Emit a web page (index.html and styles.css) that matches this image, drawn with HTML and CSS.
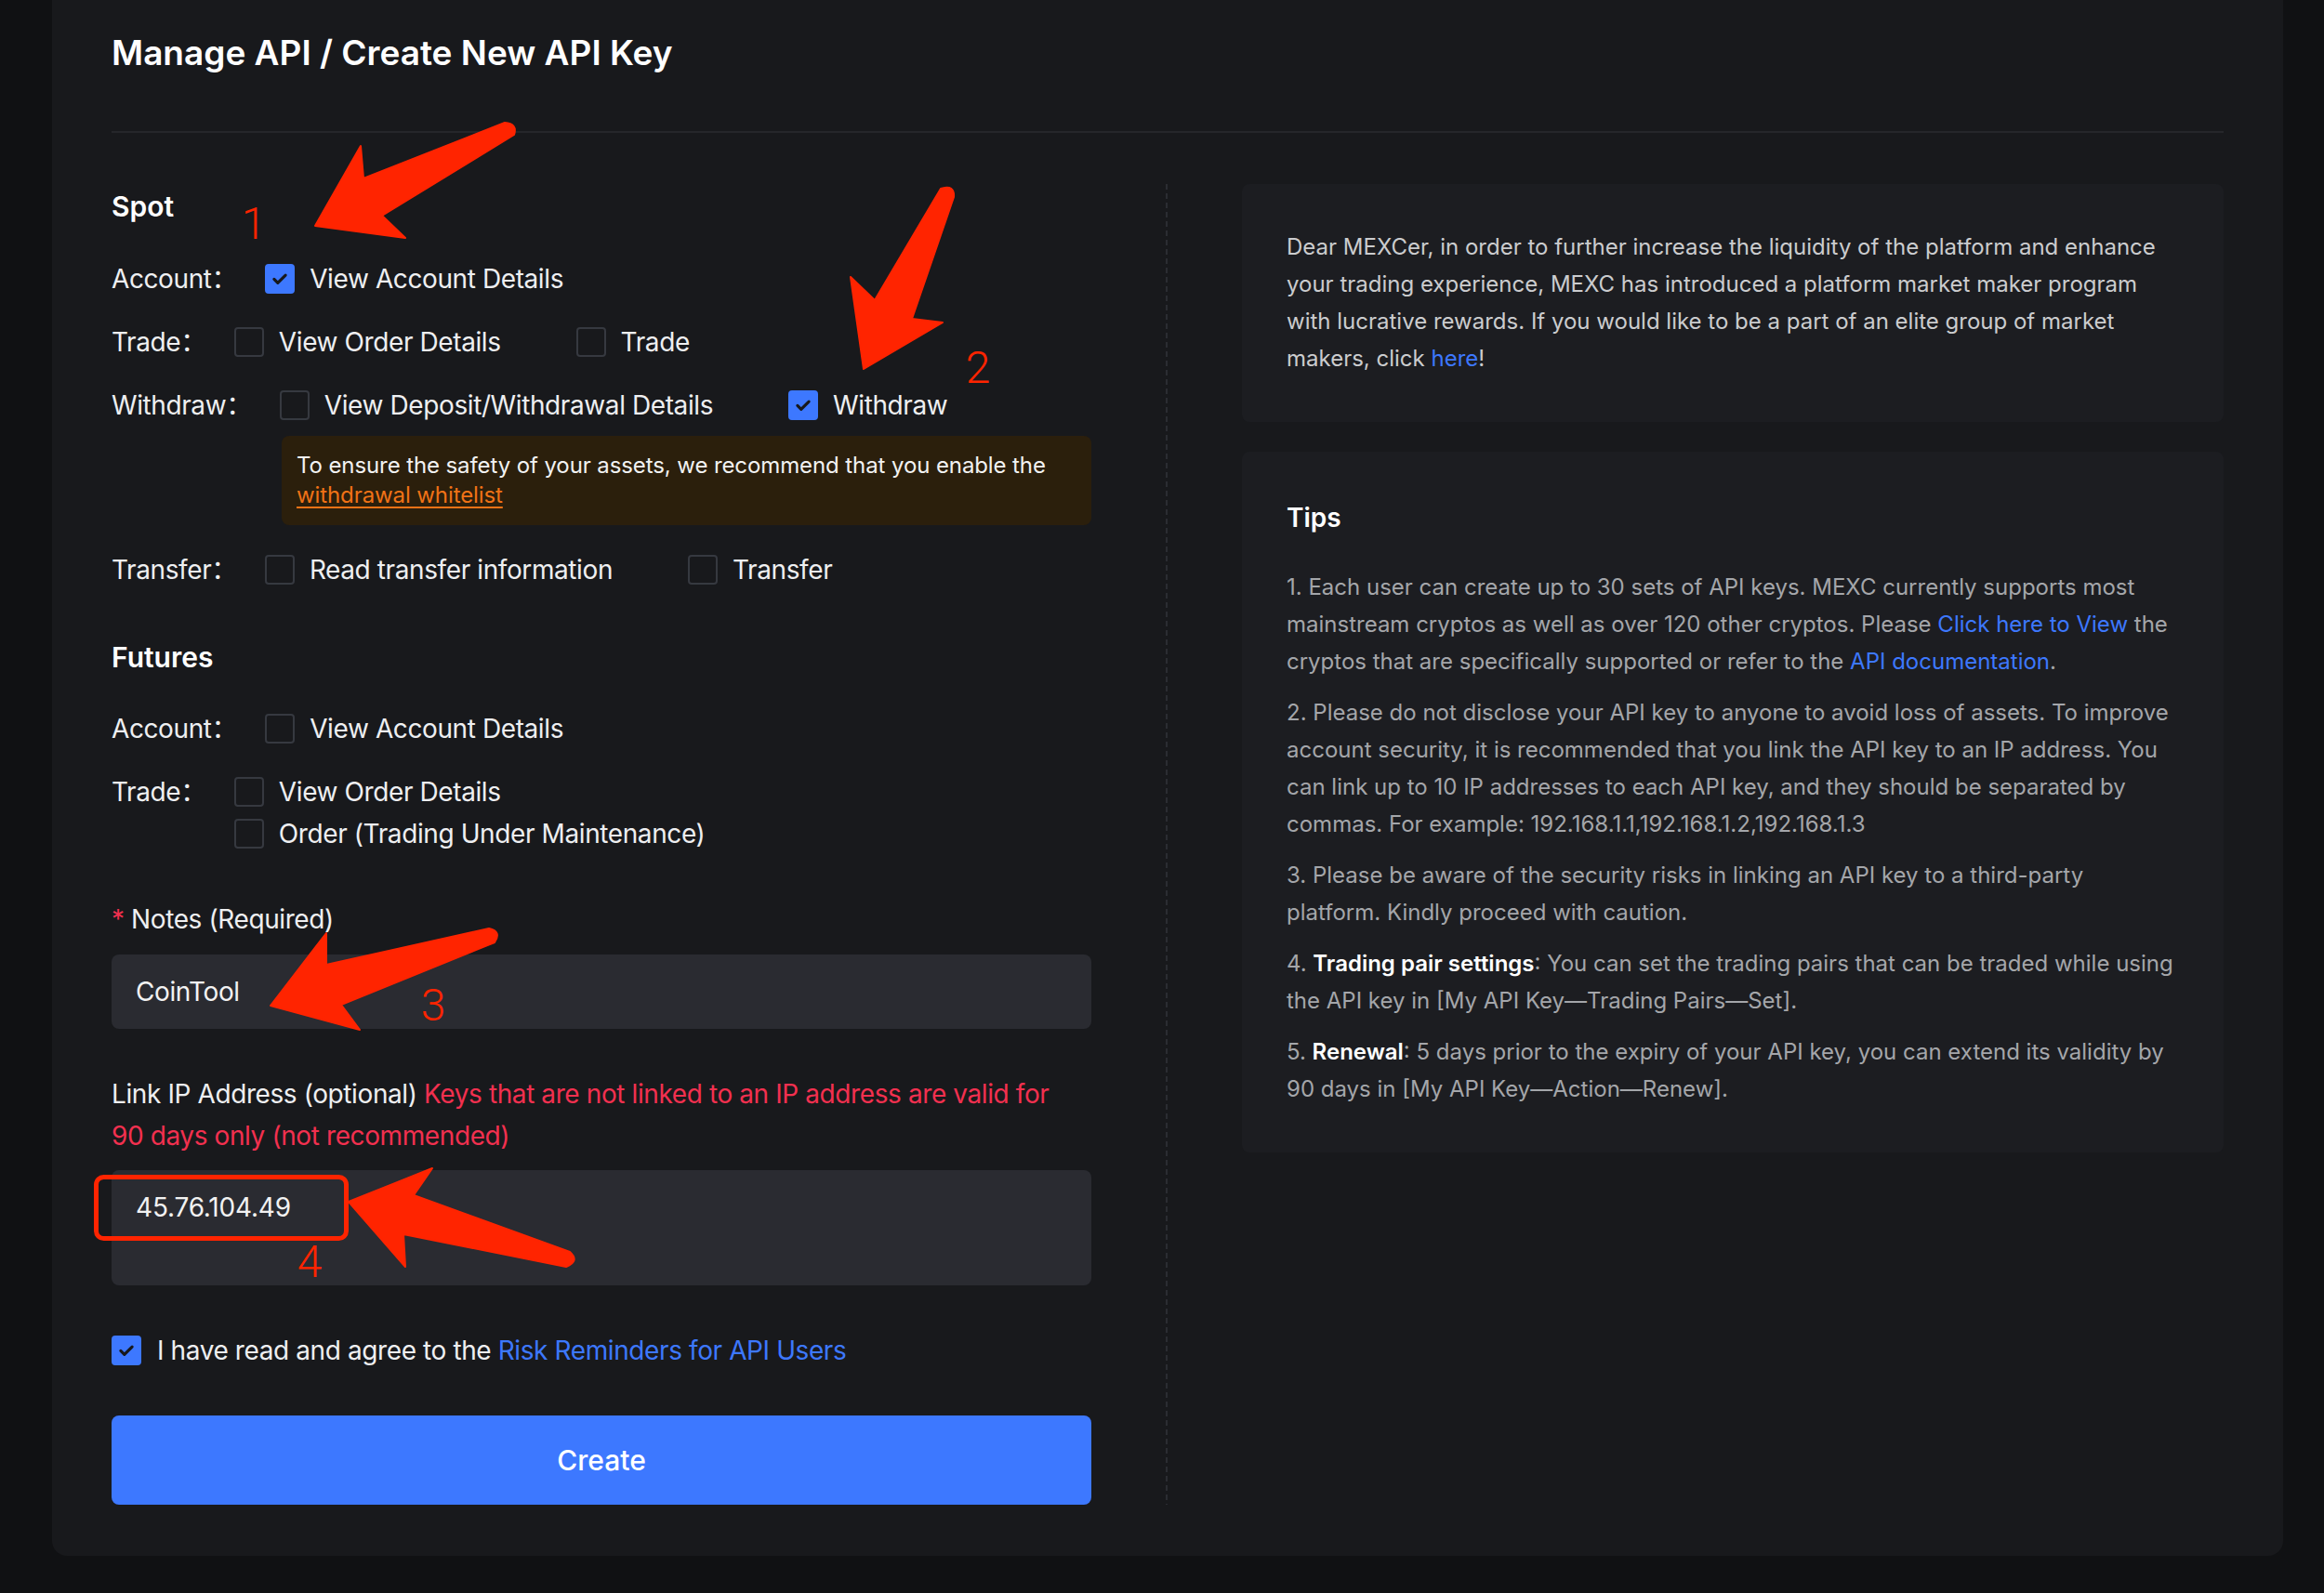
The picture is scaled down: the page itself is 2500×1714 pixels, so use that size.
FILE: index.html
```html
<!DOCTYPE html>
<html lang="en">
<head>
<meta charset="utf-8">
<title>Manage API / Create New API Key</title>
<link rel="stylesheet" href="styles.css">
</head>
<body>
<div class="page">
  <div class="card">
    <header class="head">
      <h1 class="title">Manage API / Create New API Key</h1>
    </header>
    <div class="main">
      <div class="form">
        <h2 class="sec">Spot</h2>
        <div class="row">
          <span class="lbl">Account：</span>
          <div class="opts">
            <label class="opt"><span class="cb on"><svg viewBox="0 0 32 32"><path d="M9 16.5l4.5 4.5L23 11.5"/></svg></span>View Account Details</label>
          </div>
        </div>
        <div class="row">
          <span class="lbl">Trade：</span>
          <div class="opts">
            <label class="opt"><span class="cb"></span>View Order Details</label>
            <label class="opt"><span class="cb"></span>Trade</label>
          </div>
        </div>
        <div class="row">
          <span class="lbl">Withdraw：</span>
          <div class="opts">
            <label class="opt"><span class="cb"></span>View Deposit/Withdrawal Details</label>
            <label class="opt"><span class="cb on"><svg viewBox="0 0 32 32"><path d="M9 16.5l4.5 4.5L23 11.5"/></svg></span>Withdraw</label>
          </div>
        </div>
        <div class="warn">To ensure the safety of your assets, we recommend that you enable the <a class="warn-link">withdrawal whitelist</a></div>
        <div class="row row-transfer">
          <span class="lbl">Transfer：</span>
          <div class="opts">
            <label class="opt"><span class="cb"></span>Read transfer information</label>
            <label class="opt"><span class="cb"></span>Transfer</label>
          </div>
        </div>

        <h2 class="sec sec-futures">Futures</h2>
        <div class="row row-first">
          <span class="lbl">Account：</span>
          <div class="opts">
            <label class="opt"><span class="cb"></span>View Account Details</label>
          </div>
        </div>
        <div class="row">
          <span class="lbl">Trade：</span>
          <div class="opts opts-col">
            <label class="opt"><span class="cb"></span>View Order Details</label>
            <label class="opt"><span class="cb"></span>Order (Trading Under Maintenance)</label>
          </div>
        </div>

        <div class="field-label"><span class="req">*</span> Notes (Required)</div>
        <div class="input">CoinTool</div>

        <div class="ip-note">Link IP Address (optional) <span class="danger">Keys that are not linked to an IP address are valid for 90 days only (not recommended)</span></div>
        <div class="textarea">45.76.104.49</div>

        <label class="agree"><span class="cb on"><svg viewBox="0 0 32 32"><path d="M9 16.5l4.5 4.5L23 11.5"/></svg></span><span class="agree-text">I have read and agree to the <a class="link">Risk Reminders for API Users</a></span></label>

        <button class="btn">Create</button>
      </div>

      <div class="sep"></div>

      <aside class="side">
        <div class="panel">
          <p class="promo">Dear MEXCer, in order to further increase the liquidity of the platform and enhance your trading experience, MEXC has introduced a platform market maker program with lucrative rewards. If you would like to be a part of an elite group of market makers, click <a class="link">here</a>!</p>
        </div>
        <div class="panel panel-tips">
          <h3 class="tips-title">Tips</h3>
          <p class="tip">1. Each user can create up to 30 sets of API keys. MEXC currently supports most mainstream cryptos as well as over 120 other cryptos. Please <a class="link">Click here to View</a> the cryptos that are specifically supported or refer to the <a class="link">API documentation</a>.</p>
          <p class="tip">2. Please do not disclose your API key to anyone to avoid loss of assets. To improve account security, it is recommended that you link the API key to an IP address. You can link up to 10 IP addresses to each API key, and they should be separated by commas. For example: 192.168.1.1,192.168.1.2,192.168.1.3</p>
          <p class="tip">3. Please be aware of the security risks in linking an API key to a third-party platform. Kindly proceed with caution.</p>
          <p class="tip">4. <b>Trading pair settings</b>: You can set the trading pairs that can be traded while using the API key in [My API Key—Trading Pairs—Set].</p>
          <p class="tip">5. <b>Renewal</b>: 5 days prior to the expiry of your API key, you can extend its validity by 90 days in [My API Key—Action—Renew].</p>
        </div>
      </aside>
    </div>
  </div>

  <svg class="annot" width="2500" height="1714" viewBox="0 0 2500 1714">
    <g class="arrow">
      <path d="M339,243 L388,157 L391,192 L543,132 Q557,133 553,145 L411,232 L436,256 Z"/>
      <path d="M929,397 L915,298 L941,323 L1012,203 Q1027,198 1026,212 L981,343 L1014,347 Z"/>
      <path d="M291,1082 L351,1004 L351,1038 L526,999 Q540,1002 532,1014 L367,1081 L387,1108 Z"/>
      <path d="M375,1293 L465,1257 L445,1286 L613,1347 Q624,1357 609,1363 L434,1328 L436,1363 Z"/>
    </g>
    <rect class="box" x="103.5" y="1266.5" width="269" height="66" rx="8"/>
    <text class="num" x="273" y="257">1</text>
    <text class="num" x="1052" y="412">2</text>
    <text class="num" x="466" y="1098">3</text>
    <text class="num" x="333" y="1374">4</text>
  </svg>
</div>
</body>
</html>
```

FILE: styles.css
```css
* { box-sizing: border-box; }

html, body {
  margin: 0;
  padding: 0;
  background: #101113;
}

body {
  font-family: Inter, "Noto Sans CJK SC", sans-serif;
  color: #eeeff1;
  min-height: 1714px;
}

.page {
  position: relative;
  width: 2500px;
  min-height: 1714px;
}

.card {
  margin-left: 56px;
  width: 2400px;
  background: #18191c;
  border-radius: 0 0 16px 16px;
  padding: 0 64px 55px;
}

.head {
  padding: 29px 0 56px;
  border-bottom: 2px solid #25262a;
}

.title {
  margin: 0;
  font-size: 37px;
  line-height: 56px;
  font-weight: 600;
  color: #ffffff;
}

.main {
  display: flex;
  padding-top: 55px;
}

.form {
  width: 1054px;
  flex: none;
}

.sep {
  width: 2px;
  flex: none;
  margin: 0 80px;
  background: repeating-linear-gradient(to bottom, #2b2d32 0 6px, transparent 6px 10px);
}

.side {
  width: 1056px;
  flex: none;
}

.sec {
  margin: 0;
  font-size: 30px;
  line-height: 48px;
  font-weight: 600;
  color: #ffffff;
}

.sec-futures { margin-top: 50px; }

.row {
  display: flex;
  align-items: flex-start;
  margin-top: 28px;
  font-size: 28px;
  line-height: 40px;
  letter-spacing: -0.4px;
}

.sec + .row { margin-top: 34px; }
.row-transfer { margin-top: 28px; }
.sec-futures + .row { margin-top: 33px; }

.lbl {
  margin-right: 30px;
  white-space: nowrap;
}

.opts {
  display: flex;
  gap: 81px;
}

.opts-col {
  flex-direction: column;
  gap: 5px;
}

.opt {
  display: flex;
  align-items: center;
  gap: 16px;
  height: 40px;
  white-space: nowrap;
}

.cb {
  width: 32px;
  height: 32px;
  flex: none;
  border: 2px solid #363940;
  border-radius: 4px;
  display: inline-flex;
  align-items: center;
  justify-content: center;
}

.cb.on {
  background: #3d78ff;
  border-color: #3d78ff;
}

.cb svg {
  width: 32px;
  height: 32px;
  fill: none;
  stroke: #17181b;
  stroke-width: 3.6;
  stroke-linecap: round;
  stroke-linejoin: round;
}

.warn {
  margin: 13px 0 0 183px;
  width: 871px;
  padding: 16px;
  background: #2b1f0c;
  border-radius: 8px;
  font-size: 24px;
  line-height: 32px;
  letter-spacing: -0.1px;
  color: #f2f2f2;
}

.warn-link {
  color: #f07216;
  text-decoration: underline;
  text-underline-offset: 4px;
}

.field-label {
  margin-top: 52px;
  font-size: 28px;
  line-height: 40px;
  letter-spacing: -0.4px;
}

.req { color: #f2304f; }

.input {
  margin-top: 18px;
  height: 80px;
  line-height: 80px;
  padding: 0 26px;
  background: #2a2b31;
  border-radius: 8px;
  font-size: 28px;
  letter-spacing: -0.4px;
  color: #f2f2f2;
}

.ip-note {
  margin-top: 48px;
  padding-right: 30px;
  font-size: 28px;
  line-height: 45px;
  letter-spacing: -0.4px;
}

.danger { color: #f2304f; }

.textarea {
  margin-top: 14px;
  height: 124px;
  padding: 20px 26px;
  background: #2a2b31;
  border-radius: 8px;
  font-size: 28px;
  line-height: 40px;
  letter-spacing: -0.2px;
  color: #f2f2f2;
}

.agree {
  margin-top: 50px;
  display: flex;
  align-items: center;
  gap: 17px;
  height: 40px;
  font-size: 28px;
  letter-spacing: -0.4px;
}

.link {
  color: #3d78ff;
  text-decoration: none;
}

.btn {
  display: block;
  margin-top: 50px;
  width: 100%;
  height: 96px;
  border: 0;
  border-radius: 8px;
  background: #3d78ff;
  color: #ffffff;
  font-family: Inter, sans-serif;
  font-size: 30px;
  font-weight: 500;
}

.panel {
  background: #1c1d21;
  border-radius: 8px;
  padding: 48px;
}

.panel-tips { margin-top: 32px; }

.promo {
  margin: 0;
  font-size: 24px;
  line-height: 40px;
  color: #cbccce;
}

.tips-title {
  margin: 0 0 32px;
  font-size: 28px;
  line-height: 46px;
  font-weight: 600;
  color: #ffffff;
}

.tip {
  margin: 0 0 15px;
  font-size: 24px;
  line-height: 40px;
  color: #a4a6aa;
}

.tip:last-child { margin-bottom: 0; }

.tip b {
  color: #ffffff;
  font-weight: 600;
}

.annot {
  position: absolute;
  left: 0;
  top: 0;
  pointer-events: none;
}

.arrow path {
  fill: #ff2400;
  stroke: #ff2400;
  stroke-width: 2;
  stroke-linejoin: round;
}

.box {
  fill: none;
  stroke: #ff2400;
  stroke-width: 5;
}

.num {
  fill: #ff2400;
  font-family: Roboto, "Liberation Sans", sans-serif;
  font-weight: 300;
  font-size: 48px;
  text-anchor: middle;
}
```
